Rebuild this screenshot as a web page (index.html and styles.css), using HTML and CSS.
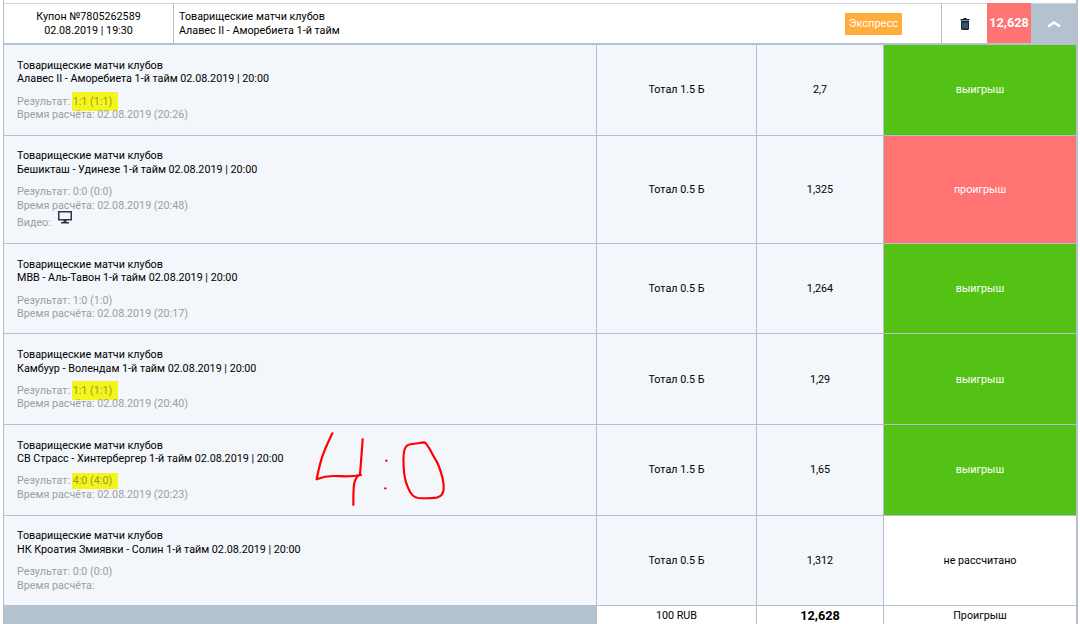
FILE: index.html
```html
<!DOCTYPE html>
<html lang="ru">
<head>
<meta charset="utf-8">
<title>Купон</title>
<link rel="stylesheet" href="styles.css">
</head>
<body>
<div class="coupon">
  <header class="head">
    <div class="h-id">Купон №7805262589<br>02.08.2019 | 19:30</div>
    <div class="h-title">Товарищеские матчи клубов<br>Алавес II - Аморебиета 1-й тайм</div>
    <div class="h-type"><span class="badge">Экспресс</span></div>
    <div class="h-del"><svg width="10" height="12" viewBox="0 0 10 12"><path d="M3.500 0h3v1h3v1.500h-9V1h3z" fill="#1b2430"/><path d="M1 3h8v7.500a1.500 1.500 0 0 1-1.500 1.500h-5A1.500 1.500 0 0 1 1 10.500z" fill="#1b2430"/><path d="M3 4.500v6M5 4.500v6M7 4.500v6" stroke="#4f7fb5" stroke-width="1"/></svg></div>
    <div class="h-sum">12,628</div>
    <div class="h-toggle"><svg width="14" height="8" viewBox="0 0 14 8"><path d="M1 6.500L7 2.500l6 4" fill="none" stroke="#fff" stroke-width="2.600"/></svg></div>
  </header>
  <section class="row r1">
    <div class="info"><p>Товарищеские матчи клубов<br>Алавес II - Аморебиета 1-й тайм 02.08.2019 | 20:00</p><p class="muted">Результат: <mark>1:1 (1:1)</mark><br>Время расчёта: 02.08.2019 (20:26)</p></div>
    <div class="cell">Тотал 1.5 Б</div><div class="cell">2,7</div><div class="state win">выигрыш</div>
  </section>
  <section class="row r2">
    <div class="info"><p>Товарищеские матчи клубов<br>Бешикташ - Удинезе 1-й тайм 02.08.2019 | 20:00</p><p class="muted">Результат: 0:0 (0:0)<br>Время расчёта: 02.08.2019 (20:48)<br>Видео: <svg class="tv" width="14" height="13" viewBox="0 0 14 13"><path d="M0 0h14v9.500H8.500V11H11v1.500H3V11h2.500V9.500H0zM1.500 1.500V8h11V1.500z" fill="#2b3a42"/></svg></p></div>
    <div class="cell">Тотал 0.5 Б</div><div class="cell">1,325</div><div class="state lose">проигрыш</div>
  </section>
  <section class="row r3">
    <div class="info"><p>Товарищеские матчи клубов<br>МВВ - Аль-Тавон 1-й тайм 02.08.2019 | 20:00</p><p class="muted">Результат: 1:0 (1:0)<br>Время расчёта: 02.08.2019 (20:17)</p></div>
    <div class="cell">Тотал 0.5 Б</div><div class="cell">1,264</div><div class="state win">выигрыш</div>
  </section>
  <section class="row r4">
    <div class="info"><p>Товарищеские матчи клубов<br>Камбуур - Волендам 1-й тайм 02.08.2019 | 20:00</p><p class="muted">Результат: <mark>1:1 (1:1)</mark><br>Время расчёта: 02.08.2019 (20:40)</p></div>
    <div class="cell">Тотал 0.5 Б</div><div class="cell">1,29</div><div class="state win">выигрыш</div>
  </section>
  <section class="row r5">
    <div class="info"><p>Товарищеские матчи клубов<br>СВ Страсс - Хинтербергер 1-й тайм 02.08.2019 | 20:00</p><p class="muted">Результат: <mark>4:0 (4:0)</mark><br>Время расчёта: 02.08.2019 (20:23)</p>
      <svg class="scrawl" width="180" height="100" viewBox="0 0 540 300"><g fill="none" stroke="#f00" stroke-width="6.500" stroke-linecap="round" stroke-linejoin="round"><path d="M127 40C115 65 105 85 95 115C88 140 83 160 80 178C95 172 110 168 130 168C155 168 180 172 213 165"/><path d="M218 58C216 85 214 115 210 162C195 175 192 185 191 205C190 225 190 240 190 255"/><path d="M348 80C340 90 339 110 341 140C342 170 348 190 355 205C362 222 372 233 385 234C405 235 425 235 440 233C455 230 461 222 461 205C462 185 455 160 445 135C438 118 430 110 425 98C418 85 410 70 403 67C390 68 375 72 365 72C358 73 352 75 348 80Z"/></g><circle cx="289" cy="122" r="3.500" fill="#f00"/><circle cx="286" cy="205" r="3.500" fill="#f00"/></svg>
    </div>
    <div class="cell">Тотал 1.5 Б</div><div class="cell">1,65</div><div class="state win">выигрыш</div>
  </section>
  <section class="row r6">
    <div class="info"><p>Товарищеские матчи клубов<br>НК Кроатия Змиявки - Солин 1-й тайм 02.08.2019 | 20:00</p><p class="muted">Результат: 0:0 (0:0)<br>Время расчёта:</p></div>
    <div class="cell">Тотал 0.5 Б</div><div class="cell">1,312</div><div class="state none">не рассчитано</div>
  </section>
  <footer class="foot">
    <div class="f-blank"></div><div class="f-cell">100 RUB</div><div class="f-cell f-bold">12,628</div><div class="f-cell">Проигрыш</div>
  </footer>
</div>
</body>
</html>
```
FILE: styles.css
```css
html, body { margin: 0; padding: 0; height: 624px; overflow: hidden; background: #fff; }
body { font: 10.75px/13.75px Roboto, "Liberation Sans", sans-serif; color: #000; }
p { margin: 0; }
.coupon { margin: 0 0 0 3px; width: 1072px; height: 624px; border-right: 2px solid #b4c2cf; border-left: 1px solid #b4c2cf; display: flex; flex-direction: column; padding-top: 3px; box-sizing: content-box; }
.head { height: 39px; flex: none; display: grid; grid-template-columns: 170px 670px 97px 46px 44px 45px; border-bottom: 2px solid #b4c2cf; background: #fff; border-top: 1px solid #cdd6de; box-sizing: content-box; }
.h-id { text-align: center; border-right: 1px solid #b4c2cf; padding-top: 6px; }
.h-title { padding: 6px 0 0 5px; }
.h-type { display: flex; align-items: center; padding-left: 1px; }
.badge { background: #ffae3b; color: #fff; width: 57px; height: 22px; line-height: 22px; text-align: center; font-size: 11px; }
.h-del { border-left: 1px solid #b4c2cf; display: flex; align-items: center; justify-content: center; }
.h-sum { background: #ff7373; color: #fff; font-weight: 700; font-size: 12.750px; display: flex; align-items: center; justify-content: center; margin-top: -1px; }
.h-toggle { background: #b4c2cf; display: flex; align-items: center; justify-content: center; margin-right: -1px; }
.row { display: grid; grid-template-columns: 592px 160px 127px 193px; border-bottom: 1px solid #b4c2cf; background: #f3f6fa; flex: none; box-sizing: border-box; }
.r1 { height: 91px; } .r2 { height: 108px; } .r3 { height: 90px; } .r4 { height: 91px; } .r5 { height: 91px; } .r6 { height: 90px; }
.info { padding: 14px 0 0 13px; position: relative; }
.r1 .info, .r3 .info, .r5 .info { padding-top: 13.600px; }
.r2 .info, .r6 .info { padding-top: 13px; }
.muted { color: #9a9fa5; margin-top: 8.500px; }
.r4 .muted, .r5 .muted { margin-top: 8px; }
mark { background: #f5f51e; color: #9a9a30; padding: 3px 6px 3px 1px; margin: 0 -6px 0 -1px; }
.r5 mark { padding: 1px 6px 2px 1px; }
.tv { margin-left: 4px; position: relative; top: -2px; }
.cell { border-left: 1px solid #b4c2cf; display: flex; align-items: center; justify-content: center; }
.state { border-left: 1px solid #b4c2cf; display: flex; align-items: center; justify-content: center; }
.r4 .cell, .r4 .state { padding-top: 1px; }
.win { background: #54c214; color: #fff; }
.lose { background: #ff7373; color: #fff; }
.none { background: #fff; }
.scrawl { position: absolute; left: 286px; top: -5px; }
.foot { height: 18px; flex: none; display: grid; grid-template-columns: 592px 160px 127px 193px; background: #fff; }
.f-blank { background: #b4c2cf; }
.f-cell { border-left: 1px solid #b4c2cf; text-align: center; line-height: 19px; }
.f-bold { font-weight: 700; font-size: 12.750px; }
```
